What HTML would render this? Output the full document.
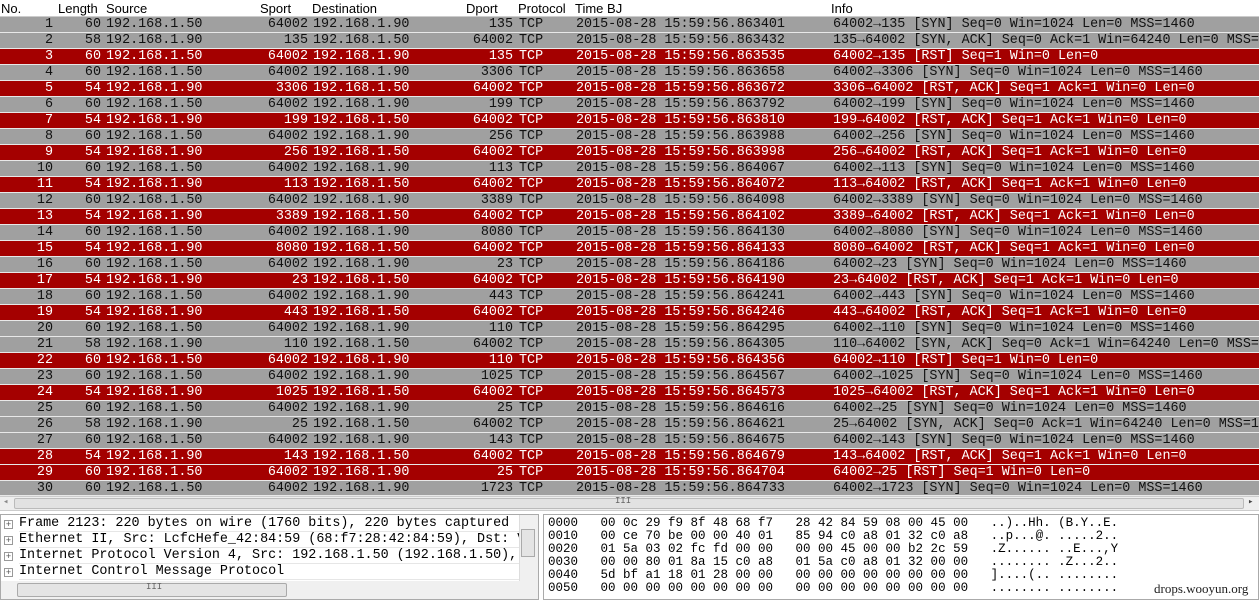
<!DOCTYPE html>
<html><head><meta charset="utf-8"><style>
*{margin:0;padding:0;box-sizing:border-box}
body{width:1259px;height:600px;overflow:hidden;background:#fff;position:relative;font-family:"Liberation Mono","DejaVu Sans Mono",monospace;font-size:13.4px}
.hdr{position:absolute;left:0;top:0;width:1259px;height:17px;background:#fff;border-bottom:1px solid #ccc;font-family:"Liberation Sans","DejaVu Sans",sans-serif;font-size:13px}
.hdr span{position:absolute;top:1px}
.r{position:absolute;left:0;width:1259px;height:16px;line-height:16px;white-space:pre;border-bottom:1px solid #e8e8e8}
.g{background:#a0a0a0;color:#111}
.d{background:#a40000;color:#fff}
.r span{position:absolute;top:0}
.a{right:1206px}.b{right:1158px}.c{left:106px}.e{right:951px}.f{left:313px}.h{right:746px}.p{left:519px}.t{left:576px}.i{left:833px}
.sb{position:absolute;left:0;top:496px;width:1259px;height:15px;background:#eee;border-top:1px solid #ccc;border-bottom:1px solid #ccc}
.det{position:absolute;left:0;top:514px;width:539px;height:86px;border:1px solid #aaa;background:#fff}
.det .ln{position:absolute;left:18px;white-space:pre;height:16px;line-height:16px;width:500px;overflow:hidden;font-size:13.4px;border-bottom:1px solid #e6e6e6}
.pl{position:absolute;left:3px;width:9px;height:9px;border:1px solid #999;font-size:9px;line-height:7px;text-align:center;color:#555;font-family:"Liberation Sans",sans-serif;background:#fff}
.hex{position:absolute;left:543px;top:514px;width:716px;height:86px;border:1px solid #aaa;background:#fff;font-size:12.5px}
.hex div{position:absolute;left:4px;white-space:pre;line-height:13px}
</style></head><body>
<div class="hdr"><span style="left:1px">No.</span><span style="left:58px">Length</span><span style="left:106px">Source</span><span style="left:260px">Sport</span><span style="left:312px">Destination</span><span style="left:466px">Dport</span><span style="left:518px">Protocol</span><span style="left:575px">Time BJ</span><span style="left:831px">Info</span></div>

<div class="r g" style="top:17px"><span class="a">1</span><span class="b">60</span><span class="c">192.168.1.50</span><span class="e">64002</span><span class="f">192.168.1.90</span><span class="h">135</span><span class="p">TCP</span><span class="t">2015-08-28 15:59:56.863401</span><span class="i">64002→135 [SYN] Seq=0 Win=1024 Len=0 MSS=1460</span></div>
<div class="r g" style="top:33px"><span class="a">2</span><span class="b">58</span><span class="c">192.168.1.90</span><span class="e">135</span><span class="f">192.168.1.50</span><span class="h">64002</span><span class="p">TCP</span><span class="t">2015-08-28 15:59:56.863432</span><span class="i">135→64002 [SYN, ACK] Seq=0 Ack=1 Win=64240 Len=0 MSS=1460</span></div>
<div class="r d" style="top:49px"><span class="a">3</span><span class="b">60</span><span class="c">192.168.1.50</span><span class="e">64002</span><span class="f">192.168.1.90</span><span class="h">135</span><span class="p">TCP</span><span class="t">2015-08-28 15:59:56.863535</span><span class="i">64002→135 [RST] Seq=1 Win=0 Len=0</span></div>
<div class="r g" style="top:65px"><span class="a">4</span><span class="b">60</span><span class="c">192.168.1.50</span><span class="e">64002</span><span class="f">192.168.1.90</span><span class="h">3306</span><span class="p">TCP</span><span class="t">2015-08-28 15:59:56.863658</span><span class="i">64002→3306 [SYN] Seq=0 Win=1024 Len=0 MSS=1460</span></div>
<div class="r d" style="top:81px"><span class="a">5</span><span class="b">54</span><span class="c">192.168.1.90</span><span class="e">3306</span><span class="f">192.168.1.50</span><span class="h">64002</span><span class="p">TCP</span><span class="t">2015-08-28 15:59:56.863672</span><span class="i">3306→64002 [RST, ACK] Seq=1 Ack=1 Win=0 Len=0</span></div>
<div class="r g" style="top:97px"><span class="a">6</span><span class="b">60</span><span class="c">192.168.1.50</span><span class="e">64002</span><span class="f">192.168.1.90</span><span class="h">199</span><span class="p">TCP</span><span class="t">2015-08-28 15:59:56.863792</span><span class="i">64002→199 [SYN] Seq=0 Win=1024 Len=0 MSS=1460</span></div>
<div class="r d" style="top:113px"><span class="a">7</span><span class="b">54</span><span class="c">192.168.1.90</span><span class="e">199</span><span class="f">192.168.1.50</span><span class="h">64002</span><span class="p">TCP</span><span class="t">2015-08-28 15:59:56.863810</span><span class="i">199→64002 [RST, ACK] Seq=1 Ack=1 Win=0 Len=0</span></div>
<div class="r g" style="top:129px"><span class="a">8</span><span class="b">60</span><span class="c">192.168.1.50</span><span class="e">64002</span><span class="f">192.168.1.90</span><span class="h">256</span><span class="p">TCP</span><span class="t">2015-08-28 15:59:56.863988</span><span class="i">64002→256 [SYN] Seq=0 Win=1024 Len=0 MSS=1460</span></div>
<div class="r d" style="top:145px"><span class="a">9</span><span class="b">54</span><span class="c">192.168.1.90</span><span class="e">256</span><span class="f">192.168.1.50</span><span class="h">64002</span><span class="p">TCP</span><span class="t">2015-08-28 15:59:56.863998</span><span class="i">256→64002 [RST, ACK] Seq=1 Ack=1 Win=0 Len=0</span></div>
<div class="r g" style="top:161px"><span class="a">10</span><span class="b">60</span><span class="c">192.168.1.50</span><span class="e">64002</span><span class="f">192.168.1.90</span><span class="h">113</span><span class="p">TCP</span><span class="t">2015-08-28 15:59:56.864067</span><span class="i">64002→113 [SYN] Seq=0 Win=1024 Len=0 MSS=1460</span></div>
<div class="r d" style="top:177px"><span class="a">11</span><span class="b">54</span><span class="c">192.168.1.90</span><span class="e">113</span><span class="f">192.168.1.50</span><span class="h">64002</span><span class="p">TCP</span><span class="t">2015-08-28 15:59:56.864072</span><span class="i">113→64002 [RST, ACK] Seq=1 Ack=1 Win=0 Len=0</span></div>
<div class="r g" style="top:193px"><span class="a">12</span><span class="b">60</span><span class="c">192.168.1.50</span><span class="e">64002</span><span class="f">192.168.1.90</span><span class="h">3389</span><span class="p">TCP</span><span class="t">2015-08-28 15:59:56.864098</span><span class="i">64002→3389 [SYN] Seq=0 Win=1024 Len=0 MSS=1460</span></div>
<div class="r d" style="top:209px"><span class="a">13</span><span class="b">54</span><span class="c">192.168.1.90</span><span class="e">3389</span><span class="f">192.168.1.50</span><span class="h">64002</span><span class="p">TCP</span><span class="t">2015-08-28 15:59:56.864102</span><span class="i">3389→64002 [RST, ACK] Seq=1 Ack=1 Win=0 Len=0</span></div>
<div class="r g" style="top:225px"><span class="a">14</span><span class="b">60</span><span class="c">192.168.1.50</span><span class="e">64002</span><span class="f">192.168.1.90</span><span class="h">8080</span><span class="p">TCP</span><span class="t">2015-08-28 15:59:56.864130</span><span class="i">64002→8080 [SYN] Seq=0 Win=1024 Len=0 MSS=1460</span></div>
<div class="r d" style="top:241px"><span class="a">15</span><span class="b">54</span><span class="c">192.168.1.90</span><span class="e">8080</span><span class="f">192.168.1.50</span><span class="h">64002</span><span class="p">TCP</span><span class="t">2015-08-28 15:59:56.864133</span><span class="i">8080→64002 [RST, ACK] Seq=1 Ack=1 Win=0 Len=0</span></div>
<div class="r g" style="top:257px"><span class="a">16</span><span class="b">60</span><span class="c">192.168.1.50</span><span class="e">64002</span><span class="f">192.168.1.90</span><span class="h">23</span><span class="p">TCP</span><span class="t">2015-08-28 15:59:56.864186</span><span class="i">64002→23 [SYN] Seq=0 Win=1024 Len=0 MSS=1460</span></div>
<div class="r d" style="top:273px"><span class="a">17</span><span class="b">54</span><span class="c">192.168.1.90</span><span class="e">23</span><span class="f">192.168.1.50</span><span class="h">64002</span><span class="p">TCP</span><span class="t">2015-08-28 15:59:56.864190</span><span class="i">23→64002 [RST, ACK] Seq=1 Ack=1 Win=0 Len=0</span></div>
<div class="r g" style="top:289px"><span class="a">18</span><span class="b">60</span><span class="c">192.168.1.50</span><span class="e">64002</span><span class="f">192.168.1.90</span><span class="h">443</span><span class="p">TCP</span><span class="t">2015-08-28 15:59:56.864241</span><span class="i">64002→443 [SYN] Seq=0 Win=1024 Len=0 MSS=1460</span></div>
<div class="r d" style="top:305px"><span class="a">19</span><span class="b">54</span><span class="c">192.168.1.90</span><span class="e">443</span><span class="f">192.168.1.50</span><span class="h">64002</span><span class="p">TCP</span><span class="t">2015-08-28 15:59:56.864246</span><span class="i">443→64002 [RST, ACK] Seq=1 Ack=1 Win=0 Len=0</span></div>
<div class="r g" style="top:321px"><span class="a">20</span><span class="b">60</span><span class="c">192.168.1.50</span><span class="e">64002</span><span class="f">192.168.1.90</span><span class="h">110</span><span class="p">TCP</span><span class="t">2015-08-28 15:59:56.864295</span><span class="i">64002→110 [SYN] Seq=0 Win=1024 Len=0 MSS=1460</span></div>
<div class="r g" style="top:337px"><span class="a">21</span><span class="b">58</span><span class="c">192.168.1.90</span><span class="e">110</span><span class="f">192.168.1.50</span><span class="h">64002</span><span class="p">TCP</span><span class="t">2015-08-28 15:59:56.864305</span><span class="i">110→64002 [SYN, ACK] Seq=0 Ack=1 Win=64240 Len=0 MSS=1460</span></div>
<div class="r d" style="top:353px"><span class="a">22</span><span class="b">60</span><span class="c">192.168.1.50</span><span class="e">64002</span><span class="f">192.168.1.90</span><span class="h">110</span><span class="p">TCP</span><span class="t">2015-08-28 15:59:56.864356</span><span class="i">64002→110 [RST] Seq=1 Win=0 Len=0</span></div>
<div class="r g" style="top:369px"><span class="a">23</span><span class="b">60</span><span class="c">192.168.1.50</span><span class="e">64002</span><span class="f">192.168.1.90</span><span class="h">1025</span><span class="p">TCP</span><span class="t">2015-08-28 15:59:56.864567</span><span class="i">64002→1025 [SYN] Seq=0 Win=1024 Len=0 MSS=1460</span></div>
<div class="r d" style="top:385px"><span class="a">24</span><span class="b">54</span><span class="c">192.168.1.90</span><span class="e">1025</span><span class="f">192.168.1.50</span><span class="h">64002</span><span class="p">TCP</span><span class="t">2015-08-28 15:59:56.864573</span><span class="i">1025→64002 [RST, ACK] Seq=1 Ack=1 Win=0 Len=0</span></div>
<div class="r g" style="top:401px"><span class="a">25</span><span class="b">60</span><span class="c">192.168.1.50</span><span class="e">64002</span><span class="f">192.168.1.90</span><span class="h">25</span><span class="p">TCP</span><span class="t">2015-08-28 15:59:56.864616</span><span class="i">64002→25 [SYN] Seq=0 Win=1024 Len=0 MSS=1460</span></div>
<div class="r g" style="top:417px"><span class="a">26</span><span class="b">58</span><span class="c">192.168.1.90</span><span class="e">25</span><span class="f">192.168.1.50</span><span class="h">64002</span><span class="p">TCP</span><span class="t">2015-08-28 15:59:56.864621</span><span class="i">25→64002 [SYN, ACK] Seq=0 Ack=1 Win=64240 Len=0 MSS=1460</span></div>
<div class="r g" style="top:433px"><span class="a">27</span><span class="b">60</span><span class="c">192.168.1.50</span><span class="e">64002</span><span class="f">192.168.1.90</span><span class="h">143</span><span class="p">TCP</span><span class="t">2015-08-28 15:59:56.864675</span><span class="i">64002→143 [SYN] Seq=0 Win=1024 Len=0 MSS=1460</span></div>
<div class="r d" style="top:449px"><span class="a">28</span><span class="b">54</span><span class="c">192.168.1.90</span><span class="e">143</span><span class="f">192.168.1.50</span><span class="h">64002</span><span class="p">TCP</span><span class="t">2015-08-28 15:59:56.864679</span><span class="i">143→64002 [RST, ACK] Seq=1 Ack=1 Win=0 Len=0</span></div>
<div class="r d" style="top:465px"><span class="a">29</span><span class="b">60</span><span class="c">192.168.1.50</span><span class="e">64002</span><span class="f">192.168.1.90</span><span class="h">25</span><span class="p">TCP</span><span class="t">2015-08-28 15:59:56.864704</span><span class="i">64002→25 [RST] Seq=1 Win=0 Len=0</span></div>
<div class="r g" style="top:481px;height:15px;overflow:hidden"><span class="a">30</span><span class="b">60</span><span class="c">192.168.1.50</span><span class="e">64002</span><span class="f">192.168.1.90</span><span class="h">1723</span><span class="p">TCP</span><span class="t">2015-08-28 15:59:56.864733</span><span class="i">64002→1723 [SYN] Seq=0 Win=1024 Len=0 MSS=1460</span></div>

<div class="sb"><div style="position:absolute;left:14px;top:1px;width:1230px;height:11px;background:#e2e2e2;border:1px solid #bbb;border-radius:2px"></div><span style="position:absolute;left:615px;top:-1px;font-size:9px;color:#666">III</span><span style="position:absolute;left:3px;top:0;font-size:9px;color:#888">◂</span><span style="position:absolute;left:1248px;top:0;font-size:9px;color:#444">▸</span></div>

<div class="det">
<span class="pl" style="top:5px">+</span><div class="ln" style="top:1px">Frame 2123: 220 bytes on wire (1760 bits), 220 bytes captured (</div>
<span class="pl" style="top:21px">+</span><div class="ln" style="top:17px">Ethernet II, Src: LcfcHefe_42:84:59 (68:f7:28:42:84:59), Dst: V</div>
<span class="pl" style="top:37px">+</span><div class="ln" style="top:33px">Internet Protocol Version 4, Src: 192.168.1.50 (192.168.1.50),</div>
<span class="pl" style="top:53px">+</span><div class="ln" style="top:49px">Internet Control Message Protocol</div>
<span style="position:absolute;left:518px;top:0;width:19px;height:66px;background:#f0f0f0;border-left:1px solid #ddd"></span>
<span style="position:absolute;left:520px;top:14px;width:14px;height:28px;background:#e4e4e4;border:1px solid #aaa"></span>
<span style="position:absolute;left:0;top:66px;width:537px;height:18px;background:#f0f0f0"></span>
<span style="position:absolute;left:16px;top:68px;width:270px;height:14px;background:#e4e4e4;border:1px solid #aaa;border-radius:2px"></span>
<span style="position:absolute;left:145px;top:67px;font-size:9px;color:#666">III</span>
</div>

<div class="hex">
<div style="top:2px">0000   00 0c 29 f9 8f 48 68 f7   28 42 84 59 08 00 45 00   ..)..Hh. (B.Y..E.</div>
<div style="top:15px">0010   00 ce 70 be 00 00 40 01   85 94 c0 a8 01 32 c0 a8   ..p...@. .....2..</div>
<div style="top:28px">0020   01 5a 03 02 fc fd 00 00   00 00 45 00 00 b2 2c 59   .Z...... ..E...,Y</div>
<div style="top:41px">0030   00 00 80 01 8a 15 c0 a8   01 5a c0 a8 01 32 00 00   ........ .Z...2..</div>
<div style="top:54px">0040   5d bf a1 18 01 28 00 00   00 00 00 00 00 00 00 00   ]....(.. ........</div>
<div style="top:67px">0050   00 00 00 00 00 00 00 00   00 00 00 00 00 00 00 00   ........ ........</div>
<span style="position:absolute;left:610px;top:66px;font-family:'Liberation Serif',serif;font-size:13px;color:#222">drops.wooyun.org</span>
</div>
</body></html>
